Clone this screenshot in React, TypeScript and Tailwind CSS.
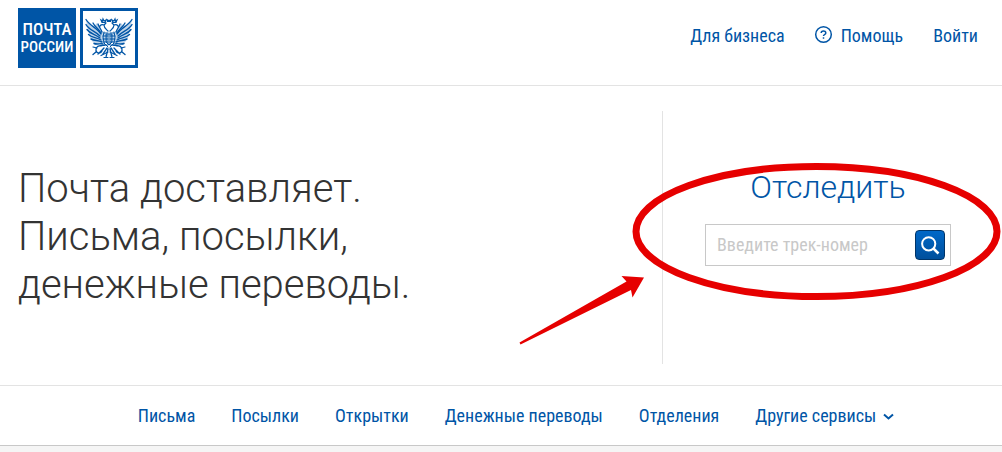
import React from 'react';

const services = ['Письма', 'Посылки', 'Открытки', 'Денежные переводы', 'Отделения'];

function EagleHalf() {
  return <g fill="none" stroke="#0055a6" strokeLinecap="round">
      <path fill="#0055a6" fillOpacity="0.25" stroke="none" d="M6 12L14 18L17 15L22 23L26 27L25 35L15 37L10 30Z" />
      <path strokeWidth="1.4" d="M21 26C17 20 10 18 6 11.5" />
      <path strokeWidth="1.4" d="M20 28C15 23 9 22 6 16.5" />
      <path strokeWidth="1.4" d="M20 30C15 26 10 26 7 21.5" />
      <path strokeWidth="1.4" d="M21 32C16 29 12 30 8.5 26.5" />
      <path strokeWidth="1.4" d="M22 34C18 32 15 33 11 31" />
      <path strokeWidth="1.4" d="M23 36C20 35 18 37 14 35.5" />
      <path strokeWidth="1.3" d="M21 25C19 21 15 19 13 15M22 24C21 21 19 19 18 16" />
      <path strokeWidth="1.2" d="M28 23C26 21 24 20 24 17C22 16 20 17 19.5 19M24 17L26 15M21 12L22 14.5L25 14.5L26 12L24 13L23 11L22.5 13Z" />
      <path strokeWidth="1" d="M28 25H24M28 28H23M28 31H23M28 34H24M28 37H25M24 24L23 29L24 35L28 39" />
      <path strokeWidth="1.4" strokeDasharray="2 0.8" d="M25 37C21 38 16 37 16 42C16 46 22 46 22 42M16 44L13 46.5M24 40L18 46M27 40L23 46M28 41L26 49" />
      <path strokeWidth="1.2" d="M28 44L21 47.5M24 49.5H28M13 39L17 40" />
    </g>;
}

function Logo() {
  return <a href="#" aria-label="Почта России" className="flex gap-1">
      <span className="flex h-[60px] w-[58px] flex-col items-center justify-center bg-[#0055a6] font-['Roboto_Condensed',Roboto,sans-serif] leading-[18px] font-medium text-white">
        <span className="text-[17px]">ПОЧТА</span>
        <span className="text-[15px]">РОССИИ</span>
      </span>
      <svg className="h-[60px] w-[58px]" viewBox="0 0 58 60" aria-hidden="true">
        <rect x="1.5" y="1.5" width="55" height="57" fill="#fff" stroke="#0055a6" strokeWidth="3" />
        <EagleHalf />
        <g transform="translate(58 0) scale(-1 1)">
          <EagleHalf />
        </g>
        <path d="M27 14L26 10.5L29 12L32 10.5L31 14Z" fill="#0055a6" />
        <path d="M26 26H32V34L29 37L26 34Z" fill="#0055a6" fillOpacity="0.5" stroke="#0055a6" strokeWidth="1" />
      </svg>
    </a>;
}

function Header() {
  return <header className="flex items-start justify-between border-b border-[#e3e3e3] px-[18px] pt-2 pb-[17px]">
      <Logo />
      <nav className="flex gap-[30px] pt-4 pr-[6px] text-lg leading-6 text-[#0055a6]">
        <a href="#">Для бизнеса</a>
        <a href="#" className="flex items-center gap-2">
          <svg className="size-[18px] overflow-visible" viewBox="0 0 18 18" fill="none" stroke="currentColor" strokeWidth="1.5" aria-hidden="true">
            <circle cx="8.5" cy="7.5" r="7.8" />
            <path d="M6.2 6C6.2 3.2 10.8 3.2 10.8 5.9C10.8 7.5 8.5 7.5 8.5 9.1M8.5 10.2V11.7" />
          </svg>
          Помощь
        </a>
        <a href="#">Войти</a>
      </nav>
    </header>;
}

function Annotation() {
  return <svg className="pointer-events-none absolute top-0 right-0 h-[253px] w-[484px]" viewBox="518 111 484 253" aria-hidden="true">
      <ellipse cx="816.5" cy="231.5" rx="180.5" ry="65" fill="none" stroke="#e60000" strokeWidth="7" />
      <path d="M519.5 342.5L626.5 281.5L621.5 276L644 277.5L632.5 297.5L631 290L520.5 344.5Z" fill="#e60000" />
    </svg>;
}

function Tracking() {
  return <section className="relative w-[340px] shrink-0 border-l border-[#e3e3e3] pt-[56px] pr-[51px] pb-[98px] pl-[42px]">
      <h2 className="text-center font-[Roboto] text-[32px] leading-10 font-light text-[#0055a6]">Отследить</h2>
      <form className="mt-[17px] flex h-[42px] items-center border border-[#c8c8c8] bg-white pr-[5px] pl-[11px]" onSubmit={e => e.preventDefault()}>
        <input type="text" aria-label="Трек-номер" placeholder="Введите трек-номер" className="min-w-0 flex-1 text-lg leading-6 text-[#333] outline-none placeholder:text-[#c8c8c8]" />
        <button type="submit" aria-label="Найти" className="flex size-[30px] items-center justify-center rounded-[4px] border border-[#003468] bg-linear-to-b from-[#0068c8] to-[#004f9c] text-white">
          <svg className="size-5" viewBox="0 0 20 20" fill="none" stroke="currentColor" strokeWidth="2" aria-hidden="true">
            <circle cx="8.7" cy="8.8" r="6.6" />
            <path d="M13.4 13.5L18.5 18.5" strokeWidth="2.5" />
          </svg>
        </button>
      </form>
      <Annotation />
    </section>;
}

export default function App() {
  return <div className="min-h-screen bg-[#f5f5f5] font-['Roboto_Condensed',Roboto,sans-serif]">
      <div className="border-b border-[#c8c8c8] bg-white">
        <Header />
        <main className="flex justify-between pt-[25px] pb-[21px] pl-[18px]">
          <h1 className="pt-[54px] font-[Roboto] text-[40px] leading-[48px] font-light text-[#333]">
            Почта доставляет.<br />
            Письма, посылки,<br />
            денежные переводы.
          </h1>
          <Tracking />
        </main>
        <nav className="flex justify-center gap-9 border-t border-[#e3e3e3] pt-[18px] pr-1 pb-[17px] pl-[34px] text-lg leading-6 text-[#0055a6]">
          {services.map(name => <a key={name} href="#">{name}</a>)}
          <button type="button" className="flex items-center gap-[7px]">
            Другие сервисы
            <svg className="h-2 w-[11px]" viewBox="0 0 11 8" fill="none" stroke="currentColor" strokeWidth="2" aria-hidden="true">
              <path d="M1 2.5L5.5 6.5L10 2.5" />
            </svg>
          </button>
        </nav>
      </div>
    </div>;
}
